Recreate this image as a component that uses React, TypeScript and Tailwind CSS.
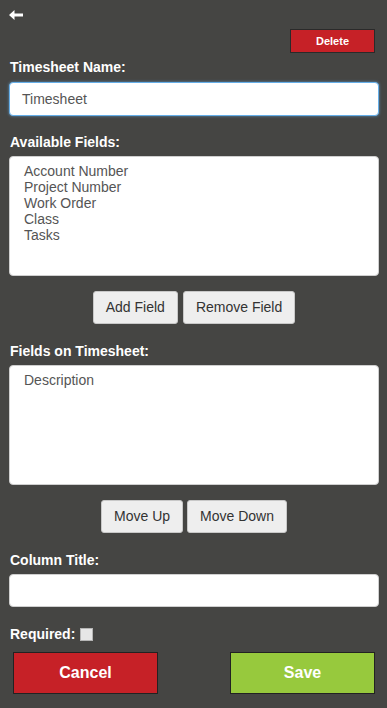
const labelCls = 'block text-[14px] leading-5 font-bold text-white'
const btnCls =
  'h-[33px] px-3 bg-[#eeeeee] border border-[#c8c8c8] rounded-[3px] text-[14px] text-[#333333]'

function ListBox({ items }: { items: string[] }) {
  return (
    <div className="mx-[9px] mr-2 h-[120px] bg-white border border-[#cfcfcf] rounded-[4px] pl-[14px] pt-[6px]">
      {items.map(item => (
        <div key={item} className="text-[14px] leading-4 text-[#555555]">
          {item}
        </div>
      ))}
    </div>
  )
}

export default function App() {
  return (
    <div className="w-[387px] h-[708px] bg-[#454543] overflow-hidden font-['Liberation_Sans',Arial,sans-serif]">
      <div className="pt-[10px] pl-[9px] h-[29px]">
        <svg width="14" height="10" viewBox="0 0 14 10" className="block">
          <path d="M0 5 L5.5 0 L5.5 3.4 L14 3.4 L14 6.6 L5.5 6.6 L5.5 10 Z" fill="#ffffff" />
        </svg>
      </div>

      <div className="flex justify-end pr-3">
        <button className="w-[85px] h-[24px] bg-[#c62127] border border-[#2a2a2a] text-white text-[11px] font-bold">
          Delete
        </button>
      </div>

      <label className={`${labelCls} mt-1 ml-[10px]`}>Timesheet Name:</label>
      <div className="mt-[5px] mx-[9px] mr-2 h-[34px] bg-white border border-[#66afe9] rounded-[4px] shadow-[0_0_3px_rgba(102,175,233,0.7)] flex items-center pl-[12px] text-[14px] text-[#555555]">
        Timesheet
      </div>

      <label className={`${labelCls} mt-4 ml-[10px]`}>Available Fields:</label>
      <div className="mt-1">
        <ListBox items={['Account Number', 'Project Number', 'Work Order', 'Class', 'Tasks']} />
      </div>
      <div className="mt-[15px] flex justify-center gap-[5px] pl-px">
        <button className={btnCls}>Add Field</button>
        <button className={btnCls}>Remove Field</button>
      </div>

      <label className={`${labelCls} mt-[17px] ml-[10px]`}>Fields on Timesheet:</label>
      <div className="mt-1">
        <ListBox items={['Description']} />
      </div>
      <div className="mt-[15px] flex justify-center gap-1 pl-px">
        <button className={btnCls}>Move Up</button>
        <button className={btnCls}>Move Down</button>
      </div>

      <label className={`${labelCls} mt-[17px] ml-[10px]`}>Column Title:</label>
      <div className="mt-1 mx-[9px] mr-2 h-[33px] bg-white border border-[#cfcfcf] rounded-[4px]" />

      <div className="mt-[17px] ml-[10px] flex items-center gap-[5px]">
        <span className="text-[14px] leading-5 font-bold text-white">Required:</span>
        <span className="w-[13px] h-[13px] bg-[#e6e6e6] border border-[#b5b5b5]" />
      </div>

      <div className="mt-2 flex justify-between pl-[13px] pr-3">
        <button className="w-[145px] h-[42px] bg-[#c62127] border border-[#222222] text-white text-[16px] font-bold">
          Cancel
        </button>
        <button className="w-[145px] h-[42px] bg-[#97c93d] border border-[#222222] text-white text-[16px] font-bold">
          Save
        </button>
      </div>
    </div>
  )
}
